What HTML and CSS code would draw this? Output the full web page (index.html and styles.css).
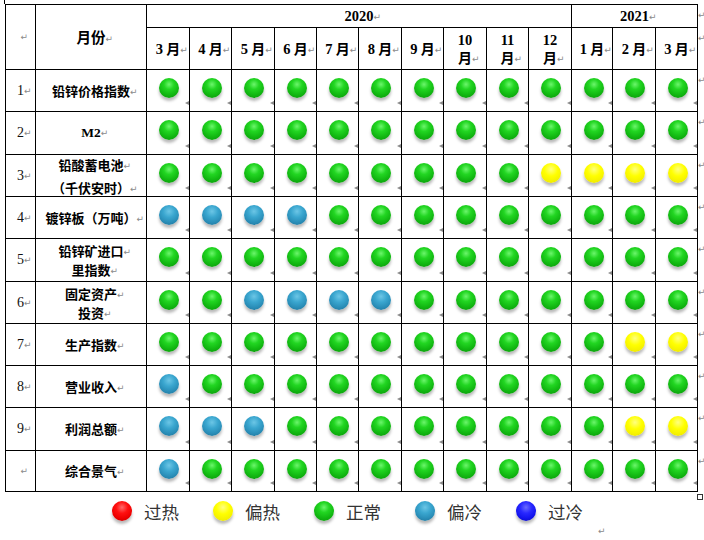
FILE: index.html
```html
<!DOCTYPE html>
<html lang="zh">
<head>
<meta charset="utf-8">
<title>指标景气</title>
<link rel="stylesheet" href="styles.css">
</head>
<body>
<div class="topline"></div>
<div class="wrap">
  <div class="grid">
    <div class="cell num rs2"><span><span class="m">↵</span></span></div>
    <div class="cell hd rs2"><span>月份<span class="m">↵</span></span></div>
    <div class="cell yr cs10"><span>2020<span class="m">↵</span></span></div>
    <div class="cell yr cs3"><span>2021<span class="m">↵</span></span></div>

    <div class="cell mo"><span><span class="d">3</span> 月<span class="m">↵</span></span></div>
    <div class="cell mo"><span><span class="d">4</span> 月<span class="m">↵</span></span></div>
    <div class="cell mo"><span><span class="d">5</span> 月<span class="m">↵</span></span></div>
    <div class="cell mo"><span><span class="d">6</span> 月<span class="m">↵</span></span></div>
    <div class="cell mo"><span><span class="d">7</span> 月<span class="m">↵</span></span></div>
    <div class="cell mo"><span><span class="d">8</span> 月<span class="m">↵</span></span></div>
    <div class="cell mo"><span><span class="d">9</span> 月<span class="m">↵</span></span></div>
    <div class="cell mo"><span><span class="d">10</span><br>月<span class="m">↵</span></span></div>
    <div class="cell mo"><span><span class="d">11</span><br>月<span class="m">↵</span></span></div>
    <div class="cell mo"><span><span class="d">12</span><br>月<span class="m">↵</span></span></div>
    <div class="cell mo"><span><span class="d">1</span> 月<span class="m">↵</span></span></div>
    <div class="cell mo"><span><span class="d">2</span> 月<span class="m">↵</span></span></div>
    <div class="cell mo"><span><span class="d">3</span> 月<span class="m">↵</span></span></div>

    <!-- row 1 -->
    <div class="cell num"><span>1<span class="m">↵</span></span></div>
    <div class="cell lb"><span>铅锌价格指数<span class="m">↵</span></span></div>
    <div class="cell c"><i class="dot g"></i></div><div class="cell c"><i class="dot g"></i></div><div class="cell c"><i class="dot g"></i></div><div class="cell c"><i class="dot g"></i></div><div class="cell c"><i class="dot g"></i></div><div class="cell c"><i class="dot g"></i></div><div class="cell c"><i class="dot g"></i></div><div class="cell c"><i class="dot g"></i></div><div class="cell c"><i class="dot g"></i></div><div class="cell c"><i class="dot g"></i></div><div class="cell c"><i class="dot g"></i></div><div class="cell c"><i class="dot g"></i></div><div class="cell c"><i class="dot g"></i></div>

    <!-- row 2 -->
    <div class="cell num"><span>2<span class="m">↵</span></span></div>
    <div class="cell lb lat"><span>M2<span class="m">↵</span></span></div>
    <div class="cell c"><i class="dot g"></i></div><div class="cell c"><i class="dot g"></i></div><div class="cell c"><i class="dot g"></i></div><div class="cell c"><i class="dot g"></i></div><div class="cell c"><i class="dot g"></i></div><div class="cell c"><i class="dot g"></i></div><div class="cell c"><i class="dot g"></i></div><div class="cell c"><i class="dot g"></i></div><div class="cell c"><i class="dot g"></i></div><div class="cell c"><i class="dot g"></i></div><div class="cell c"><i class="dot g"></i></div><div class="cell c"><i class="dot g"></i></div><div class="cell c"><i class="dot g"></i></div>

    <!-- row 3 -->
    <div class="cell num"><span>3<span class="m">↵</span></span></div>
    <div class="cell lb l23"><span>铅酸蓄电池<span class="m">↵</span><br>（千伏安时）<span class="m">↵</span></span></div>
    <div class="cell c"><i class="dot g"></i></div><div class="cell c"><i class="dot g"></i></div><div class="cell c"><i class="dot g"></i></div><div class="cell c"><i class="dot g"></i></div><div class="cell c"><i class="dot g"></i></div><div class="cell c"><i class="dot g"></i></div><div class="cell c"><i class="dot g"></i></div><div class="cell c"><i class="dot g"></i></div><div class="cell c"><i class="dot g"></i></div><div class="cell c"><i class="dot y"></i></div><div class="cell c"><i class="dot y"></i></div><div class="cell c"><i class="dot y"></i></div><div class="cell c"><i class="dot y"></i></div>

    <!-- row 4 -->
    <div class="cell num"><span>4<span class="m">↵</span></span></div>
    <div class="cell lb"><span>镀锌板（万吨）<span class="m">↵</span></span></div>
    <div class="cell c"><i class="dot t"></i></div><div class="cell c"><i class="dot t"></i></div><div class="cell c"><i class="dot t"></i></div><div class="cell c"><i class="dot t"></i></div><div class="cell c"><i class="dot g"></i></div><div class="cell c"><i class="dot g"></i></div><div class="cell c"><i class="dot g"></i></div><div class="cell c"><i class="dot g"></i></div><div class="cell c"><i class="dot g"></i></div><div class="cell c"><i class="dot g"></i></div><div class="cell c"><i class="dot g"></i></div><div class="cell c"><i class="dot g"></i></div><div class="cell c"><i class="dot g"></i></div>

    <!-- row 5 -->
    <div class="cell num"><span>5<span class="m">↵</span></span></div>
    <div class="cell lb l19"><span>铅锌矿进口<span class="m">↵</span><br>里指数<span class="m">↵</span></span></div>
    <div class="cell c"><i class="dot g"></i></div><div class="cell c"><i class="dot g"></i></div><div class="cell c"><i class="dot g"></i></div><div class="cell c"><i class="dot g"></i></div><div class="cell c"><i class="dot g"></i></div><div class="cell c"><i class="dot g"></i></div><div class="cell c"><i class="dot g"></i></div><div class="cell c"><i class="dot g"></i></div><div class="cell c"><i class="dot g"></i></div><div class="cell c"><i class="dot g"></i></div><div class="cell c"><i class="dot g"></i></div><div class="cell c"><i class="dot g"></i></div><div class="cell c"><i class="dot g"></i></div>

    <!-- row 6 -->
    <div class="cell num"><span>6<span class="m">↵</span></span></div>
    <div class="cell lb l19"><span>固定资产<span class="m">↵</span><br>投资<span class="m">↵</span></span></div>
    <div class="cell c"><i class="dot g"></i></div><div class="cell c"><i class="dot g"></i></div><div class="cell c"><i class="dot t"></i></div><div class="cell c"><i class="dot t"></i></div><div class="cell c"><i class="dot t"></i></div><div class="cell c"><i class="dot t"></i></div><div class="cell c"><i class="dot g"></i></div><div class="cell c"><i class="dot g"></i></div><div class="cell c"><i class="dot g"></i></div><div class="cell c"><i class="dot g"></i></div><div class="cell c"><i class="dot g"></i></div><div class="cell c"><i class="dot g"></i></div><div class="cell c"><i class="dot g"></i></div>

    <!-- row 7 -->
    <div class="cell num"><span>7<span class="m">↵</span></span></div>
    <div class="cell lb"><span>生产指数<span class="m">↵</span></span></div>
    <div class="cell c"><i class="dot g"></i></div><div class="cell c"><i class="dot g"></i></div><div class="cell c"><i class="dot g"></i></div><div class="cell c"><i class="dot g"></i></div><div class="cell c"><i class="dot g"></i></div><div class="cell c"><i class="dot g"></i></div><div class="cell c"><i class="dot g"></i></div><div class="cell c"><i class="dot g"></i></div><div class="cell c"><i class="dot g"></i></div><div class="cell c"><i class="dot g"></i></div><div class="cell c"><i class="dot g"></i></div><div class="cell c"><i class="dot y"></i></div><div class="cell c"><i class="dot y"></i></div>

    <!-- row 8 -->
    <div class="cell num"><span>8<span class="m">↵</span></span></div>
    <div class="cell lb"><span>营业收入<span class="m">↵</span></span></div>
    <div class="cell c"><i class="dot t"></i></div><div class="cell c"><i class="dot g"></i></div><div class="cell c"><i class="dot g"></i></div><div class="cell c"><i class="dot g"></i></div><div class="cell c"><i class="dot g"></i></div><div class="cell c"><i class="dot g"></i></div><div class="cell c"><i class="dot g"></i></div><div class="cell c"><i class="dot g"></i></div><div class="cell c"><i class="dot g"></i></div><div class="cell c"><i class="dot g"></i></div><div class="cell c"><i class="dot g"></i></div><div class="cell c"><i class="dot g"></i></div><div class="cell c"><i class="dot g"></i></div>

    <!-- row 9 -->
    <div class="cell num"><span>9<span class="m">↵</span></span></div>
    <div class="cell lb"><span>利润总额<span class="m">↵</span></span></div>
    <div class="cell c"><i class="dot t"></i></div><div class="cell c"><i class="dot t"></i></div><div class="cell c"><i class="dot t"></i></div><div class="cell c"><i class="dot g"></i></div><div class="cell c"><i class="dot g"></i></div><div class="cell c"><i class="dot g"></i></div><div class="cell c"><i class="dot g"></i></div><div class="cell c"><i class="dot g"></i></div><div class="cell c"><i class="dot g"></i></div><div class="cell c"><i class="dot g"></i></div><div class="cell c"><i class="dot g"></i></div><div class="cell c"><i class="dot y"></i></div><div class="cell c"><i class="dot y"></i></div>

    <!-- row 10 -->
    <div class="cell num"><span><span class="m">↵</span></span></div>
    <div class="cell lb"><span>综合景气<span class="m">↵</span></span></div>
    <div class="cell c"><i class="dot t"></i></div><div class="cell c"><i class="dot g"></i></div><div class="cell c"><i class="dot g"></i></div><div class="cell c"><i class="dot g"></i></div><div class="cell c"><i class="dot g"></i></div><div class="cell c"><i class="dot g"></i></div><div class="cell c"><i class="dot g"></i></div><div class="cell c"><i class="dot g"></i></div><div class="cell c"><i class="dot g"></i></div><div class="cell c"><i class="dot g"></i></div><div class="cell c"><i class="dot g"></i></div><div class="cell c"><i class="dot g"></i></div><div class="cell c"><i class="dot g"></i></div>
  </div>
  <div class="eor">
    <span>↵</span><span>↵</span><span>↵</span><span>↵</span><span>↵</span><span>↵</span>
    <span>↵</span><span>↵</span><span>↵</span><span>↵</span><span>↵</span><span>↵</span>
  </div>
</div>
<div class="endsq"></div>
<div class="legend">
  <div class="item"><i class="dot r"></i><span>过热</span></div>
  <div class="item"><i class="dot y"></i><span>偏热</span></div>
  <div class="item"><i class="dot g"></i><span>正常</span></div>
  <div class="item"><i class="dot t"></i><span>偏冷</span></div>
  <div class="item"><i class="dot b"></i><span>过冷</span></div>
</div>
<div class="lastmark">↵</div>
</body>
</html>
```
FILE: styles.css
```css
html, body {
  margin: 0;
  padding: 0;
  background: #fff;
  overflow: hidden;
}
body {
  width: 704px;
  height: 540px;
  font-family: "Liberation Serif", "Noto Sans CJK SC", serif;
  color: #000;
}
.topline {
  margin-left: 4px;
  width: 0;
  height: 4px;
  border-left: 1px solid #000;
}
.wrap {
  display: flex;
  margin-left: 5px;
}
.grid {
  display: grid;
  grid-template-columns: 29px 110px 42px 41px 42px 41px 41px 42px 41px 42px 41px 42px 40px 42px 41px;
  grid-template-rows: 22px 41px 41px 42px 41px 41px 42px 41px 41px 41px 42px 40px;
  gap: 1px;
  padding: 1px;
  background: #000;
}
.eor {
  display: grid;
  grid-template-rows: 22px 41px 41px 42px 41px 41px 42px 41px 41px 41px 42px 40px;
  gap: 1px;
  padding: 1px 0;
  width: 7px;
}
.eor span {
  font-family: "DejaVu Sans", sans-serif;
  font-size: 9px;
  line-height: 10px;
  color: #8a8a8a;
  padding-top: 5px;
}
.cell {
  background: #fff;
  display: flex;
  align-items: center;
  justify-content: center;
  text-align: center;
  white-space: nowrap;
}
.rs2 { grid-row: span 2; }
.cs10 { grid-column: span 10; }
.cs3 { grid-column: span 3; }
.m {
  display: inline-block;
  width: 0;
  overflow: visible;
  font-family: "DejaVu Sans", sans-serif;
  font-weight: 400;
  font-size: 9px;
  line-height: 9px;
  color: #8a8a8a;
  vertical-align: 1px;
}
.num {
  font-size: 14px;
  color: #111;
}
.hd {
  font-family: "Noto Sans CJK SC", sans-serif;
  font-weight: 700;
  font-size: 14.5px;
  padding-bottom: 1px;
}
.yr {
  font-weight: 700;
  font-size: 14.5px;
}
.mo {
  font-family: "Noto Sans CJK SC", sans-serif;
  font-weight: 700;
  font-size: 14px;
  line-height: 17px;
}
.mo .d {
  font-family: "Liberation Serif", serif;
  font-size: 14.5px;
}
.lb {
  font-family: "Noto Sans CJK SC", sans-serif;
  font-weight: 700;
  font-size: 13px;
  line-height: 16px;
}
.lat {
  font-family: "Liberation Serif", serif;
  font-size: 13.5px;
}
.l23 { line-height: 23px; }
.l19 { line-height: 19px; }
.c {
  position: relative;
  display: block;
}
.c::after {
  content: "";
  position: absolute;
  right: 0;
  bottom: 6px;
  width: 0;
  height: 0;
  border-right: 4px solid #8a8a8a;
  border-top: 2px solid transparent;
  border-bottom: 2px solid transparent;
}
.dot {
  display: block;
  width: 20px;
  height: 20px;
  border-radius: 50%;
  box-shadow: 0 3px 3px rgba(0, 0, 0, 0.28);
}
.c .dot {
  margin: 8px 0 0 12px;
}
.g { background: radial-gradient(circle at 50% 32%, #6cf56c 0%, #22d622 30%, #12b812 62%, #0a8e0a 100%); }
.t { background: radial-gradient(circle at 50% 32%, #6cc6e6 0%, #3aa6cf 35%, #2a8eb8 65%, #1f6e92 100%); }
.y { background: radial-gradient(circle at 50% 32%, #ffff80 0%, #ffff00 40%, #f4f000 72%, #d2c200 100%); }
.r { background: radial-gradient(circle at 50% 32%, #ff6a6a 0%, #ff1010 35%, #ee0000 65%, #b00000 100%); }
.b { background: radial-gradient(circle at 50% 32%, #6a6aff 0%, #2828ff 35%, #1414ee 65%, #0a0aa8 100%); }
.endsq {
  margin: 2px 0 0 697px;
  width: 4px;
  height: 4px;
  border: 1px solid #333;
}
.legend {
  display: flex;
  margin-top: 1px;
  padding-left: 112px;
  height: 20px;
}
.item {
  display: flex;
  align-items: center;
  width: 101px;
  flex: none;
}
.item span {
  margin-left: 12px;
  font-family: "Noto Sans CJK SC", sans-serif;
  font-weight: 400;
  font-size: 17.5px;
  line-height: 20px;
  color: #333;
  padding-top: 1px;
}
.lastmark {
  padding: 5px 0 0 598px;
  font-family: "DejaVu Sans", sans-serif;
  font-size: 9px;
  line-height: 10px;
  color: #8a8a8a;
}
```
